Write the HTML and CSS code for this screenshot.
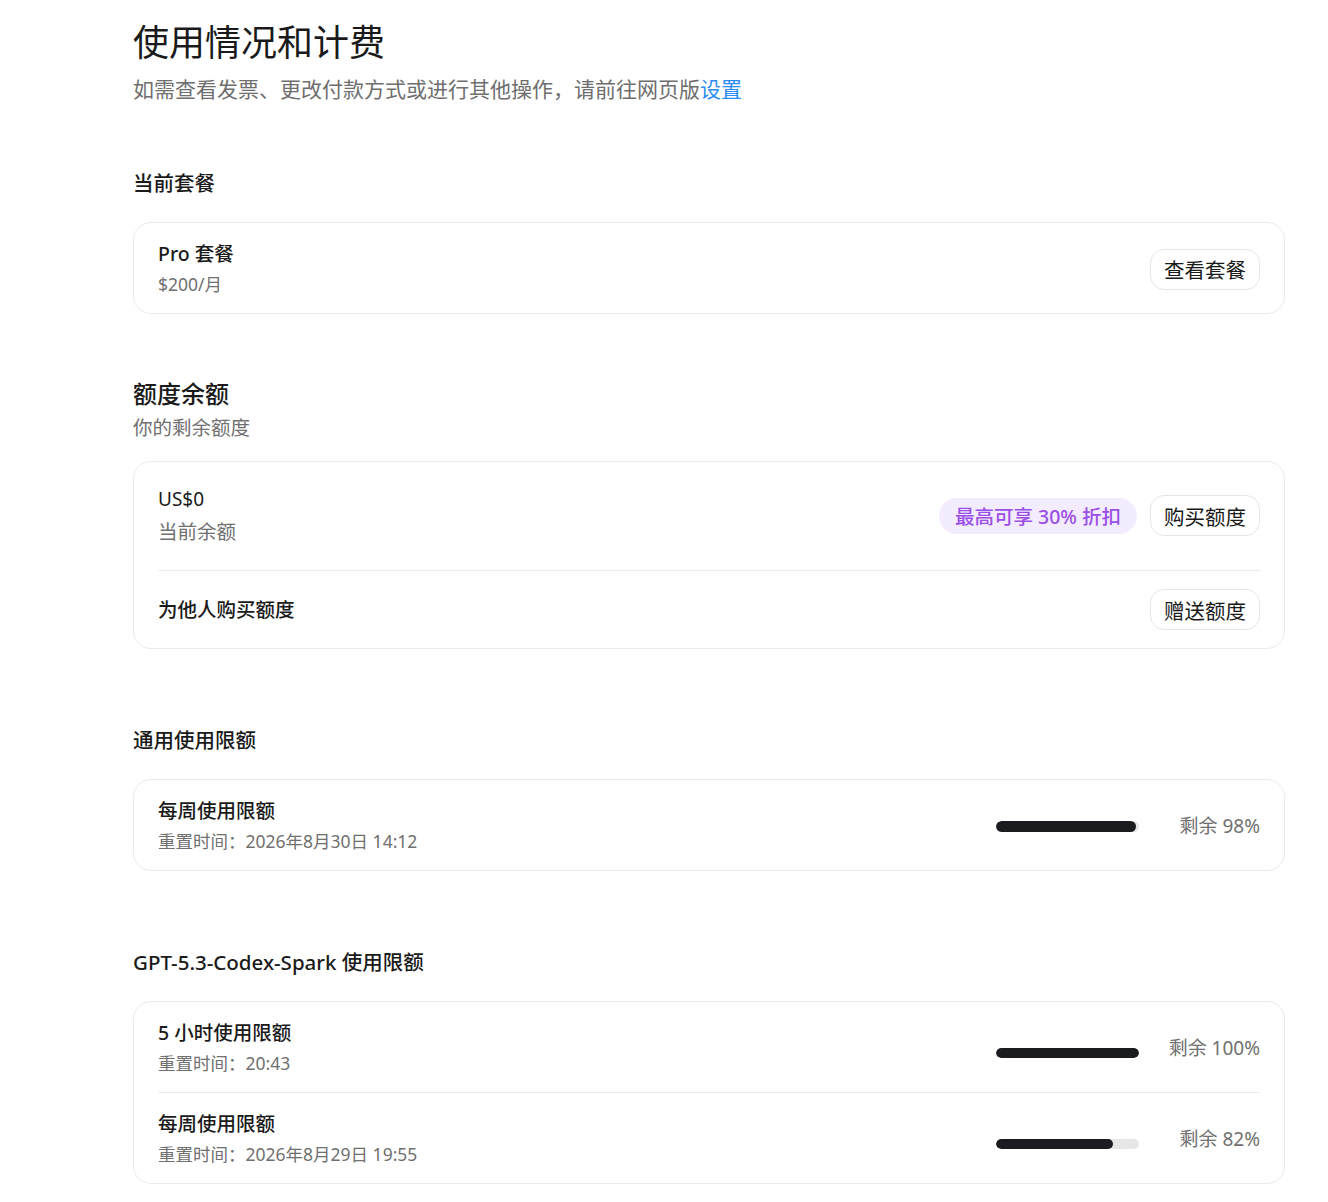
FILE: index.html
```html
<!DOCTYPE html>
<html lang="zh-CN">
<head>
    <meta charset="UTF-8">
    <meta name="viewport" content="width=device-width, initial-scale=1.0">
    <title>使用情况和计费</title>
    <link rel="stylesheet" href="styles.css">
</head>
<body>
    <div class="page">
        <header class="page-header">
            <h1>使用情况和计费</h1>
            <p class="page-desc">如需查看发票、更改付款方式或进行其他操作，请前往网页版<a href="#">设置</a></p>
        </header>

        <section class="section section-plan">
            <h2 class="section-title">当前套餐</h2>
            <div class="card">
                <div class="row">
                    <div class="row-text">
                        <div class="item-title">Pro 套餐</div>
                        <div class="item-sub">$200/月</div>
                    </div>
                    <button class="btn" type="button">查看套餐</button>
                </div>
            </div>
        </section>

        <section class="section section-credits">
            <h2 class="section-title large">额度余额</h2>
            <p class="section-desc">你的剩余额度</p>
            <div class="card">
                <div class="row row-balance">
                    <div class="row-text">
                        <div class="balance-amount">US$0</div>
                        <div class="balance-label">当前余额</div>
                    </div>
                    <div class="row-actions">
                        <span class="badge">最高可享 30% 折扣</span>
                        <button class="btn" type="button">购买额度</button>
                    </div>
                </div>
                <div class="row row-gift">
                    <div class="item-title">为他人购买额度</div>
                    <button class="btn" type="button">赠送额度</button>
                </div>
            </div>
        </section>

        <section class="section section-limits">
            <h2 class="section-title">通用使用限额</h2>
            <div class="card">
                <div class="row">
                    <div class="row-text">
                        <div class="item-title">每周使用限额</div>
                        <div class="item-sub">重置时间：2026年8月30日 14:12</div>
                    </div>
                    <div class="meter">
                        <div class="meter-track"><div class="meter-fill" style="width: 98%"></div></div>
                        <span class="meter-label">剩余 98%</span>
                    </div>
                </div>
            </div>
        </section>

        <section class="section section-limits">
            <h2 class="section-title">GPT-5.3-Codex-Spark 使用限额</h2>
            <div class="card card-multi">
                <div class="row">
                    <div class="row-text">
                        <div class="item-title">5 小时使用限额</div>
                        <div class="item-sub">重置时间：20:43</div>
                    </div>
                    <div class="meter">
                        <div class="meter-track"><div class="meter-fill" style="width: 100%"></div></div>
                        <span class="meter-label">剩余 100%</span>
                    </div>
                </div>
                <div class="row">
                    <div class="row-text">
                        <div class="item-title">每周使用限额</div>
                        <div class="item-sub">重置时间：2026年8月29日 19:55</div>
                    </div>
                    <div class="meter">
                        <div class="meter-track"><div class="meter-fill" style="width: 82%"></div></div>
                        <span class="meter-label">剩余 82%</span>
                    </div>
                </div>
            </div>
        </section>
    </div>
</body>
</html>
```

FILE: styles.css
```css
body {
    margin: 0;
    padding: 0;
    background-color: #fff;
    color: #1a1a1a;
    font-family: "Noto Sans", "Noto Sans CJK SC", sans-serif;
}
.page {
    padding: 19px 43px 0 133px;
}
.page-header h1 {
    margin: 0;
    font-size: 36px;
    line-height: 48px;
    font-weight: 400;
    color: #1a1a1a;
}
.page-desc {
    margin: 7px 0 0;
    font-size: 21px;
    line-height: 30px;
    color: #6e6e6e;
}
.page-desc a {
    color: #2b8cf5;
    text-decoration: none;
}
.section-plan {
    margin-top: 65px;
}
.section-credits {
    margin-top: 64px;
}
.section-limits {
    margin-top: 77px;
}
.section-title {
    margin: 0 0 25px;
    font-size: 20.5px;
    line-height: 28px;
    font-weight: 500;
}
.section-title.large {
    margin-bottom: 4px;
    font-size: 24px;
    line-height: 32px;
}
.section-desc {
    margin: 0 0 19px;
    font-size: 19.5px;
    line-height: 28px;
    color: #707070;
}
.card {
    border: 1px solid #ebebeb;
    border-radius: 18px;
    padding: 0 24px;
}
.row {
    display: flex;
    align-items: center;
    justify-content: space-between;
    padding: 17px 0 15px;
}
.row + .row {
    border-top: 1px solid #ebebeb;
}
.item-title {
    font-size: 19.5px;
    line-height: 28px;
    font-weight: 500;
}
.item-sub {
    margin-top: 2px;
    font-size: 17.5px;
    line-height: 28px;
    color: #707070;
}
.row-balance {
    padding: 23px 0 24px;
}
.balance-amount {
    font-size: 19px;
    line-height: 28px;
}
.balance-label {
    margin-top: 5px;
    font-size: 19.5px;
    line-height: 28px;
    color: #707070;
}
.row-gift {
    padding: 18px 0;
}
.row-actions {
    display: flex;
    align-items: center;
    gap: 13px;
}
.badge {
    display: inline-flex;
    align-items: center;
    height: 36px;
    padding: 0 16px;
    border-radius: 18px;
    background-color: #f3ebfe;
    color: #9a4fe6;
    font-size: 19.5px;
    font-weight: 500;
}
.btn {
    height: 41px;
    padding: 0 13px;
    border: 1px solid #e6e6e6;
    border-radius: 14px;
    background-color: #fff;
    color: #1a1a1a;
    font-family: inherit;
    font-size: 20.5px;
    cursor: pointer;
}
.btn:hover {
    background-color: #f7f7f7;
}
.meter {
    display: flex;
    align-items: center;
    gap: 29px;
}
.meter-track {
    width: 143px;
    height: 11px;
    border-radius: 6px;
    background-color: #e6e6e6;
    overflow: hidden;
}
.meter-fill {
    height: 100%;
    border-radius: 6px;
    background-color: #1b1c20;
}
.meter-label {
    width: 92px;
    text-align: right;
    font-size: 19px;
    line-height: 28px;
    color: #707070;
}
.card-multi .meter-track {
    height: 10px;
    margin-top: 10px;
}
```
